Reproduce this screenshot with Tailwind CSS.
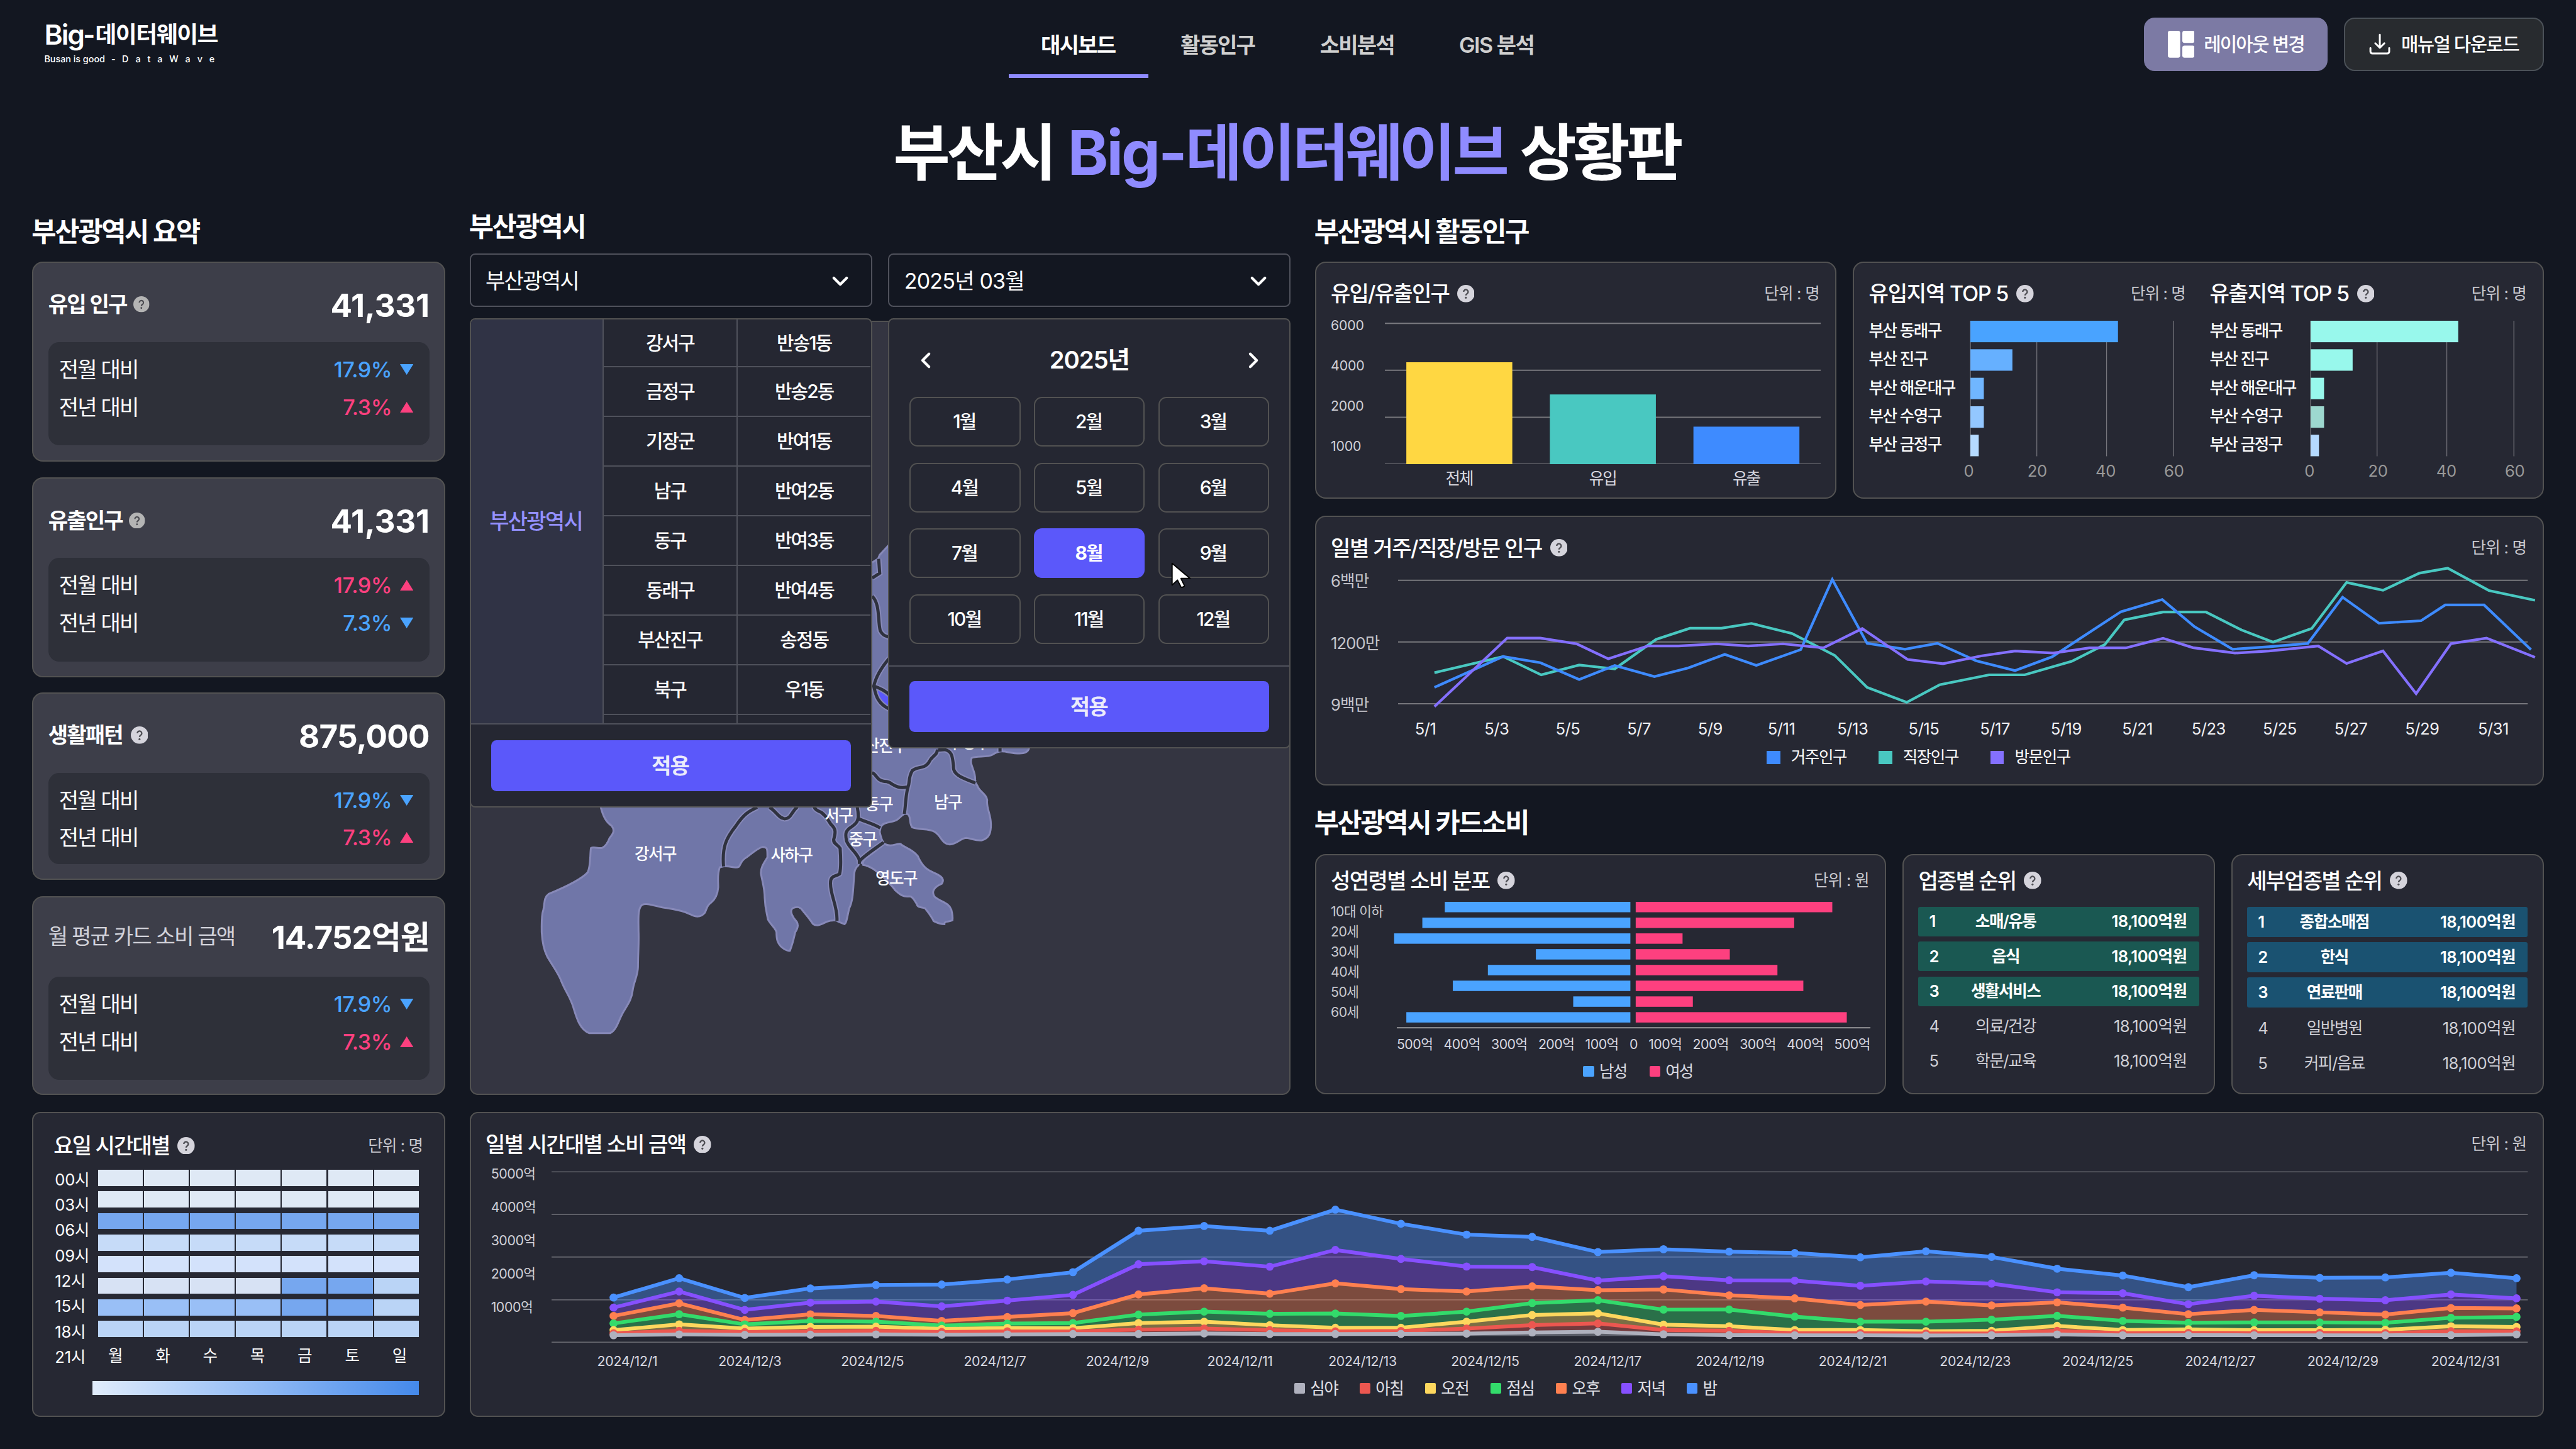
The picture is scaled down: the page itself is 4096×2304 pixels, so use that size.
<!DOCTYPE html>
<html lang="ko" class="text-[34.1333px]">
<head>
<meta charset="utf-8">
<title>Big-데이터웨이브 상황판</title>
<script src="https://cdn.jsdelivr.net/npm/@tailwindcss/browser@4"></script>
</head>
<body class="w-[4096px] h-[2304px] overflow-hidden bg-[#131721] text-white whitespace-nowrap tracking-[-0.055em] font-['Inter','Noto_Sans_CJK_KR',sans-serif]">

<svg class="hidden">
  <symbol id="help" viewBox="0 0 24 24">
    <circle cx="12" cy="12" r="12" fill="currentColor"/>
    <path d="M8.900 9.600a3.100 3.100 0 1 1 4.700 2.600c-1 .65-1.600 1.200-1.600 2.400" fill="none" stroke="#4c4c52" stroke-width="2"/>
    <circle cx="12" cy="17.600" r="1.350" fill="#4c4c52"/>
  </symbol>
  <symbol id="down" viewBox="0 0 10 8"><path d="M0 0h10L5 8z" fill="currentColor"/></symbol>
  <symbol id="up" viewBox="0 0 10 8"><path d="M0 8h10L5 0z" fill="currentColor"/></symbol>
  <symbol id="chev" viewBox="0 0 16 16"><path d="M3.200 5.600L8 10.400l4.800-4.800" fill="none" stroke="currentColor" stroke-width="2" stroke-linecap="round" stroke-linejoin="round"/></symbol>
</svg>

<header class="h-16.5 flex items-start justify-between relative">
  <div class="pl-8.25 pt-3.5">
    <div class="flex items-center h-6">
      <span class="text-[1.3rem] leading-none font-semibold tracking-[-0.045em] w-7.25">Big</span>
      <span class="text-[1.2rem] leading-none font-semibold w-2.25">-</span>
      <span class="text-[1.08rem] leading-none font-bold tracking-[-0.04em]">데이터웨이브</span>
    </div>
    <div class="flex items-center h-3 text-[0.42rem] leading-none font-medium tracking-[0em]">
      <span class="w-12.5">Busan is good</span><span class="w-2">-</span><span class="flex justify-between w-17.25"><i class="not-italic">D</i><i class="not-italic">a</i><i class="not-italic">t</i><i class="not-italic">a</i><i class="not-italic">W</i><i class="not-italic">a</i><i class="not-italic">v</i><i class="not-italic">e</i></span>
    </div>
  </div>
  <nav class="absolute left-188 top-0 flex text-base font-semibold text-[#cfcfcf]">
    <a class="w-26 h-14.5 pt-3 pr-0.25 flex items-center justify-center text-white border-b-[6px] border-[#8f8bff]">대시보드</a>
    <a class="w-26 h-14.5 pt-2.25 pr-0.25 flex items-center justify-center">활동인구</a>
    <a class="w-26 h-14.5 pt-2.25 pr-0.25 flex items-center justify-center">소비분석</a>
    <a class="w-26 h-14.5 pt-2.25 pr-0.25 flex items-center justify-center tracking-[-0.045em]">GIS 분석</a>
  </nav>
  <div class="flex gap-3 pt-3.25 pr-6 text-sm font-medium">
    <button class="w-34.25 h-10 rounded-lg bg-[#7c7aa4] flex items-center justify-center gap-1.75">
      <svg class="size-5" viewBox="0 0 20 20" fill="#fff"><rect x="0" y="0" width="9.200" height="20" rx="1.600"/><rect x="10.800" y="0" width="9.200" height="9" rx="1.600"/><rect x="10.800" y="11" width="9.200" height="9" rx="1.600"/></svg>
      <span>레이아웃 변경</span>
    </button>
    <button class="w-37.25 h-10 rounded-lg bg-[#282b2f] border-2 border-[#4b5158] flex items-center justify-center gap-2">
      <svg class="size-4" viewBox="0 0 16 16" fill="none" stroke="#fff" stroke-width="1.400" stroke-linecap="round" stroke-linejoin="round"><path d="M8 1v9.600M4.600 7.400L8 10.800l3.400-3.400M1 11v2.600a1.400 1.400 0 0 0 1.400 1.400h11.200a1.400 1.400 0 0 0 1.400-1.400V11"/></svg>
      <span class="tracking-[-0.055em]">매뉴얼 다운로드</span>
    </button>
  </div>
</header>

<h1 class="h-22.5 pt-1.5 pr-0.5 flex items-center justify-center text-[2.875rem] leading-none font-bold tracking-[-0.055em] [word-spacing:0.045em]"><span>부산시 <span class="text-[#8f8bff]"><span class="tracking-[-0.03em]">Big-</span>데이터웨이브</span> 상황판</span></h1>

<main class="flex gap-4.5 px-6">

  <section class="w-77 flex flex-col">
    <h2 class="h-6 mt-1.25 mb-2.5 -ml-px flex items-center text-xl font-bold tracking-[-0.053em]">부산광역시 요약</h2>
    <div id="summary" class="flex flex-col"></div>
    <article class="h-56.75 mt-3.25 rounded-md bg-[#262833] border-2 border-[#525252] pl-3.75 pr-4.75">
      <div class="h-6 mt-3 mb-1 flex items-center">
        <h3 class="text-base font-medium">요일 시간대별</h3>
        <svg class="size-3.25 ml-1.5 text-[#d5d4dc]"><use href="#help"/></svg>
        <span class="ml-auto text-xs tracking-[-0.035em] text-[#c9c9cf] -mr-0.75">단위 : 명</span>
      </div>
      <div class="flex justify-between">
        <div id="hours" class="flex flex-col text-xs tracking-[-0.01em] pl-0.25"></div>
        <div class="w-59.75 pt-0.5 flex flex-col">
          <div id="heat" class="grid grid-cols-7 gap-x-0.25 gap-y-[0.2565rem]"></div>
          <div id="days" class="grid grid-cols-7 w-61.75 -ml-1.25 mt-1.5 text-xs text-center"></div>
          <div class="h-2.5 w-60.75 -ml-1 mt-2.75 bg-linear-to-r from-[#e0ecfb] to-[#4489ea]"></div>
        </div>
      </div>
    </article>
  </section>

  <section class="flex flex-col">
    <div class="flex gap-4.5 h-165">

      <div class="w-153 flex flex-col">
        <h2 class="h-6 mt-0.25 mb-2 -ml-px flex items-center text-xl font-bold tracking-[-0.053em]">부산광역시</h2>
        <div class="flex gap-3 h-10 relative z-10">
          <div class="w-75 relative">
            <div class="h-10 rounded border-2 border-[#4f515b] flex items-center justify-between pl-2.75 pr-3.75 pt-0.25 text-base"><span>부산광역시</span><svg class="size-4"><use href="#chev"/></svg></div>
            <div class="absolute left-0 top-12 w-75 h-91.25 rounded border-2 border-[#525252] bg-[#252732] overflow-hidden flex flex-col">
              <div class="h-75.25 flex overflow-hidden text-sm font-medium">
                <div class="w-24.5 bg-[#303345] flex items-center justify-center text-base text-[#9490ff] pr-0.25">부산광역시</div>
                <div id="gu" class="w-25 border-l-2 border-[#4f515b] flex flex-col"></div>
                <div id="dong" class="w-25 border-l-2 border-[#4f515b] flex flex-col"></div>
              </div>
              <div class="border-t-2 border-[#4f515b] px-3.75 pt-3">
                <button class="block w-full h-9.5 rounded bg-[#5b58fa] text-base font-semibold text-[#ebebfb] pr-0.25">적용</button>
              </div>
            </div>
          </div>
          <div class="w-75 relative">
            <div class="h-10 rounded border-2 border-[#4f515b] flex items-center justify-between pl-2.75 pr-3.75 pt-0.25 text-base"><span class="tracking-[-0.025em]">2025년 03월</span><svg class="size-4"><use href="#chev"/></svg></div>
            <div class="absolute left-0 top-12 w-75 h-80.25 rounded border-2 border-[#525252] bg-[#252732] flex flex-col">
              <div class="h-14.5 pt-0.75 px-4.75 flex items-center justify-between">
                <svg class="size-4 rotate-90"><use href="#chev"/></svg>
                <span class="text-lg font-semibold tracking-[-0.03em]">2025년</span>
                <svg class="size-4 -rotate-90"><use href="#chev"/></svg>
              </div>
              <div id="months" class="px-3.75 grid grid-cols-3 gap-x-2.5 gap-y-3 text-sm font-medium"></div>
              <div class="mt-4 border-t-2 border-[#4f515b] px-3.75 pt-2.75">
                <button class="block w-full h-9.5 rounded bg-[#5b58fa] text-base font-semibold text-[#ebebfb] pr-0.25">적용</button>
              </div>
              <svg class="absolute left-52.5 top-45.25 w-4 h-5" viewBox="0 0 16 20"><path d="M.8.8v16.200l4-3.700 2.700 5.300c.3.6 2.800-.6 2.500-1.200L7.400 12.100h6.800z" fill="#fff" stroke="#000" stroke-width=".9" stroke-linejoin="round"/></svg>
            </div>
          </div>
        </div>
        <div class="relative h-144.25 mt-2.5 rounded-md border-2 border-[#525252] bg-[#343541] overflow-hidden">
          <svg class="absolute -inset-[2px] w-153 h-144.25" viewBox="12.5 -1057 1535.400 2585" preserveAspectRatio="none">
            <g fill="#7076a8" stroke="#8789b8" stroke-width="3">
              <path vector-effect="non-scaling-stroke" d="M257 500V565C262 600 268 618 278 630C284 645 281 655 274 670C270 690 265 700 259 704C250 705 244 698 239 704C237 730 239 760 233 785C220 810 190 835 160 857C150 870 153 890 150 910C146 930 147 960 147 985C148 1015 150 1040 157 1065C168 1100 178 1120 184 1150C192 1185 200 1200 206 1235C212 1270 218 1310 236 1322L275 1322C288 1310 290 1280 300 1250C308 1225 315 1210 317 1180C319 1150 327 1130 327 1100C327 1060 329 1020 328 980C328 940 326 905 335 893C345 885 360 900 380 904C395 908 410 912 425 925C435 935 445 935 452 920C456 905 456 895 463 887C472 875 476 860 477 835C477 810 475 790 480 768L487 765C484 700 492 670 510 630C525 590 535 580 550 568V500z"/>
              <path vector-effect="non-scaling-stroke" d="M765 -250L776 -262L779 -275L797 -310H1058V372C1055 388 1045 392 1020 384C1010 380 1002 378 990 392C980 402 960 395 951 403C945 425 961 450 957 482L962 497C965 515 980 525 980 545C978 570 987 590 987 625C987 650 985 670 970 678C960 680 955 675 942 670C930 670 925 690 910 692C895 690 895 665 882 650C870 636 855 645 840 635C833 620 839 600 831 590L825 590C815 600 815 612 803 615C790 620 784 622 781 633L779 650C781 665 782 675 785 682L742 745L739 762C733 770 731 785 731 800C729 850 729 880 722 905C718 935 717 955 713 958L702 950L697 945C692 946 688 944 680 950C670 958 662 968 654 957C648 940 643 930 636 915C632 902 625 897 616 905C610 915 616 935 624 950C627 960 627 970 621 985C619 1000 617 1020 611 1047C605 1048 600 1042 594 1032C588 1020 586 1010 586 985C584 970 575 960 570 942C568 920 565 910 564 870C564 840 560 820 557 790C556 770 562 755 569 735C569 710 570 700 560 700C550 705 540 722 530 735C520 745 520 755 516 766C510 774 500 763 490 765L487 765C484 700 492 670 510 630C525 590 535 580 550 568V-250z"/>
              <path vector-effect="non-scaling-stroke" d="M788 690C800 702 810 688 818 690C825 703 838 705 850 730C862 780 875 780 888 793C900 805 898 815 895 823C880 835 875 850 882 867C895 885 908 885 913 910C915 925 916 935 915 945C908 952 900 945 900 958C890 958 885 952 880 948C875 930 870 920 864 905C858 900 850 905 848 890C843 875 840 865 834 865C820 868 815 855 808 845C803 830 795 820 788 805C775 785 765 765 748 760C745 745 755 735 765 722z"/>
            </g>
            <path vector-effect="non-scaling-stroke" d="M774 172L797 200V238C780 222 777 205 774 172z" fill="#5b58fa"/>
            <g fill="none">
              <path vector-effect="non-scaling-stroke" stroke="#8789b8" stroke-width="9" d="M487 765C484 700 492 670 510 630C525 590 535 580 550 568M573 568C585 580 590 604 601 606C613 606 613 585 625 566M699 947C701 900 686 860 687 820C687 795 696 800 704 790C707 770 706 730 705 705C700 690 692 690 693 675C697 650 697 640 688 625C680 605 680 598 670 585C662 578 658 575 656 565M741 757V745C738 720 722 705 717 680C714 655 715 645 727 632C738 618 738 610 739 600C739 585 738 575 737 567M741 607C755 618 770 625 780 637M786 685C775 700 745 735 742 747M765 452C775 460 772 480 792 482C803 485 808 508 830 500M825 590C828 560 827 530 832 500C836 480 832 470 840 445C850 430 862 440 870 420C878 390 885 400 887 375M888 377L900 375C915 380 915 400 917 430C915 460 935 470 958 487M1004 360V382M777 -262L779 -214L765 -198M765 -137C780 -110 775 -57 780 -22C785 -5 790 -5 797 0M797 70C785 95 772 130 768 163C772 200 777 222 797 240M768 163C780 170 790 180 797 192"/>
              <path vector-effect="non-scaling-stroke" stroke="#2f323f" stroke-width="5" d="M487 765C484 700 492 670 510 630C525 590 535 580 550 568M573 568C585 580 590 604 601 606C613 606 613 585 625 566M699 947C701 900 686 860 687 820C687 795 696 800 704 790C707 770 706 730 705 705C700 690 692 690 693 675C697 650 697 640 688 625C680 605 680 598 670 585C662 578 658 575 656 565M741 757V745C738 720 722 705 717 680C714 655 715 645 727 632C738 618 738 610 739 600C739 585 738 575 737 567M741 607C755 618 770 625 780 637M786 685C775 700 745 735 742 747M765 452C775 460 772 480 792 482C803 485 808 508 830 500M825 590C828 560 827 530 832 500C836 480 832 470 840 445C850 430 862 440 870 420C878 390 885 400 887 375M888 377L900 375C915 380 915 400 917 430C915 460 935 470 958 487M1004 360V382M777 -262L779 -214L765 -198M765 -137C780 -110 775 -57 780 -22C785 -5 790 -5 797 0M797 70C785 95 772 130 768 163C772 200 777 222 797 240M768 163C780 170 790 180 797 192"/>
            </g>
          </svg>
          <div id="pins" class="text-xs font-medium tracking-[-0.06em]"></div>
        </div>
      </div>

      <div class="w-229 flex flex-col">
        <h2 class="h-6 mt-1.25 mb-2.5 -ml-px flex items-center text-xl font-bold tracking-[-0.053em]">부산광역시 활동인구</h2>
        <div class="flex gap-3 h-[11.05rem]">

          <article class="w-97.25 rounded-lg bg-[#262833] border-2 border-[#525252] p-2.75">
            <div class="h-6 flex items-center">
              <h3 class="text-base font-medium">유입/유출인구</h3>
              <svg class="size-3.25 ml-1.5 text-[#d5d4dc]"><use href="#help"/></svg>
              <span class="ml-auto text-xs tracking-[-0.03em] text-[#c9c9cf] pr-0.25">단위 : 명</span>
            </div>
            <div class="flex justify-between">
              <div class="-mt-0.75 text-[0.625rem] tracking-[-0.01em] text-[#d0d0d7] flex flex-col">
                <span class="h-7.5 flex items-center">6000</span><span class="h-7.5 flex items-center">4000</span><span class="h-7.5 flex items-center">2000</span><span class="h-7.5 flex items-center">1000</span>
              </div>
              <div class="w-81.25 pt-2.25">
                <svg class="w-81.25 h-26.5" viewBox="0 0 325 106">
                  <path d="M0 1h325M0 36h325M0 71h325M0 106h325" stroke="#77777d" stroke-width="1" fill="none"/>
                  <rect x="16" y="30" width="79" height="76" fill="#ffd742"/><rect x="123" y="54" width="79" height="52" fill="#49c8c1"/><rect x="230" y="78" width="79" height="28" fill="#3e8bff"/>
                </svg>
                <div class="grid grid-cols-3 px-0.5 mt-0.75 text-xs text-center text-[#d8d8e0]"><span>전체</span><span>유입</span><span>유출</span></div>
              </div>
            </div>
          </article>

          <article id="top5" class="w-128.75 rounded-lg bg-[#262833] border-2 border-[#525252] p-2.75 flex gap-4.5"></article>
        </div>

        <article class="mt-[0.79rem] h-50.25 shrink-0 rounded-lg bg-[#262833] border-2 border-[#525252] p-2.75">
          <div class="h-6 flex items-center">
            <h3 class="text-base font-medium tracking-[-0.045em]">일별 거주/직장/방문 인구</h3>
            <svg class="size-3.25 ml-1.5 text-[#d5d4dc]"><use href="#help"/></svg>
            <span class="ml-auto text-xs tracking-[-0.03em] text-[#c9c9cf] pr-0.25">단위 : 명</span>
          </div>
          <div class="flex justify-between items-start">
            <div class="-mt-2.5 -mb-6 text-xs text-[#c5c5cc] tracking-[-0.035em]">
              <div class="h-11.5 flex items-center">6백만</div><div class="h-11.5 flex items-center">1200만</div><div class="h-11.5 flex items-center">9백만</div>
            </div>
            <svg class="w-210.5 h-[6.637rem] overflow-visible" viewBox="111 320 1397 740" preserveAspectRatio="none" fill="none">
              <g stroke="#77777d" stroke-width="2"><path vector-effect="non-scaling-stroke" d="M111 404.500H1508"/><path vector-effect="non-scaling-stroke" d="M111 724H1508"/><path vector-effect="non-scaling-stroke" d="M111 1045H1508"/></g>
              <g stroke-width="4.200">
                <polyline vector-effect="non-scaling-stroke" stroke="#49c8c1" points="156,884 241,800 288,895 335,844 379,864 430,711 472,653 511,653 548,628 598,680 651,794 691,960 740,1038 781,946 842,895 886,895 944,825 985,738 1009,610 1057,569 1110,569 1154,662 1193,725 1241,654 1284,415 1329,456 1374,367 1409,341 1460,457 1517,508"/>
                <polyline vector-effect="non-scaling-stroke" stroke="#3e8bff" points="156,960 241,800 287,832 335,919 379,847 428,904 470,859 515,789 554,846 609,764 648,400 691,731 738,762 778,731 826,822 874,873 920,801 1005,567 1056,504 1096,645 1143,762 1188,749 1236,732 1279,492 1324,627 1376,614 1406,532 1454,532 1512,764"/>
                <polyline vector-effect="non-scaling-stroke" stroke="#8470ff" points="156,1060 246,704 287,704 332,734 371,812 420,745 458,745 505,734 544,745 587,734 637,755 685,655 741,815 785,837 832,797 874,771 921,782 966,755 1011,755 1057,705 1094,754 1146,782 1188,771 1249,745 1284,836 1329,771 1370,993 1413,733 1457,704 1517,804"/>
              </g>
            </svg>
          </div>
          <div id="mayAxis" class="grid grid-cols-16 w-212.25 ml-11 mt-2.25 h-4 items-center text-center text-xs tracking-[-0.02em] text-[#f0f0f4]"></div>
          <div class="flex justify-center gap-6 mt-1.25 h-4 text-xs tracking-[-0.057em] -ml-4">
            <span class="flex items-center gap-2"><i class="size-2.5 bg-[#3e8bff]"></i>거주인구</span>
            <span class="flex items-center gap-2"><i class="size-2.5 bg-[#49c8c1]"></i>직장인구</span>
            <span class="flex items-center gap-2"><i class="size-2.5 bg-[#8470ff]"></i>방문인구</span>
          </div>
        </article>

        <h2 class="h-6 mt-4 mb-2.75 -ml-px flex items-center text-xl font-bold tracking-[-0.053em]">부산광역시 카드소비</h2>
        <div class="flex gap-3 h-[11.2rem] shrink-0">
          <article class="w-106.5 rounded-lg bg-[#262833] border-2 border-[#525252] p-2.75">
            <div class="h-4 flex items-center">
              <h3 class="text-base font-medium tracking-[-0.05em]">성연령별 소비 분포</h3>
              <svg class="size-3.25 ml-1.5 text-[#d5d4dc]"><use href="#help"/></svg>
              <span class="ml-auto text-xs tracking-[-0.03em] text-[#c9c9cf] pr-0.25">단위 : 원</span>
            </div>
            <div class="flex justify-between pt-2">
              <div class="text-[0.625rem] text-[#c9c9cf] tracking-[-0.03em]">
                <div class="h-3.75 flex items-center">10대 이하</div><div class="h-3.75 flex items-center">20세</div><div class="h-3.75 flex items-center">30세</div><div class="h-3.75 flex items-center">40세</div><div class="h-3.75 flex items-center">50세</div><div class="h-3.75 flex items-center">60세</div>
              </div>
              <div class="w-88.25">
                <svg id="gender" class="w-88.25 h-[5.9rem] overflow-visible" viewBox="233 537 1243 658" preserveAspectRatio="none"></svg>
                <div class="flex justify-between mt-1 h-4 items-center text-[0.625rem] tracking-[-0.025em] text-[#d8d8e0]"><span>500억</span><span>400억</span><span>300억</span><span>200억</span><span>100억</span><span>0</span><span>100억</span><span>200억</span><span>300억</span><span>400억</span><span>500억</span></div>
                <div class="flex gap-4.25 ml-34.75 h-4 mt-1 text-xs text-[#d8d8e0]"><span class="flex items-center gap-1"><i class="size-2 rounded-[2px] bg-[#4aa3ff]"></i>남성</span><span class="flex items-center gap-1"><i class="size-2 rounded-[2px] bg-[#fd407f]"></i>여성</span></div>
              </div>
            </div>
          </article>
          <article class="w-58.25 rounded-lg bg-[#262833] border-2 border-[#525252] p-2.75">
            <div class="h-4 flex items-center">
              <h3 class="text-base font-medium">업종별 순위</h3>
              <svg class="size-3.25 ml-1.5 text-[#d5d4dc]"><use href="#help"/></svg>
            </div>
            <div id="rankA" class="mt-[0.72rem] flex flex-col gap-1 text-xs"></div>
          </article>
          <article class="w-58.25 rounded-lg bg-[#262833] border-2 border-[#525252] p-2.75">
            <div class="h-4 flex items-center">
              <h3 class="text-base font-medium">세부업종별 순위</h3>
              <svg class="size-3.25 ml-1.5 text-[#d5d4dc]"><use href="#help"/></svg>
            </div>
            <div id="rankB" class="mt-[0.72rem] flex flex-col gap-1 text-xs"></div>
          </article>
        </div>
      </div>
    </div>

    <article class="mt-3.25 h-56.75 rounded-md bg-[#262833] border-2 border-[#525252] p-2.75">
      <div class="h-6 flex items-center">
        <h3 class="text-base font-medium tracking-[-0.052em]">일별 시간대별 소비 금액</h3>
        <svg class="size-3.25 ml-1.5 text-[#d5d4dc]"><use href="#help"/></svg>
        <span class="ml-auto text-xs tracking-[-0.03em] text-[#c9c9cf] pr-0.25">단위 : 원</span>
      </div>
      <div class="flex justify-between">
        <div class="pl-1 text-[0.625rem] text-[#d0d0d7] tracking-[-0.02em]">
          <div class="h-[1.55rem] -mt-0.5 flex items-center">5000억</div><div class="h-[1.55rem] flex items-center">4000억</div><div class="h-[1.55rem] flex items-center">3000억</div><div class="h-[1.55rem] flex items-center">2000억</div><div class="h-[1.55rem] flex items-center">1000억</div>
        </div>
        <svg id="area" class="w-368.25 h-32 mt-2 overflow-visible" viewBox="0 0 1473 128"></svg>
      </div>
      <div id="decAxis" class="grid grid-cols-16 w-[91.33rem] ml-15 mt-1.5 h-4 items-center text-center text-[0.625rem] tracking-[-0.015em] text-[#d8d8e0]"></div>
      <div id="decLegend" class="flex justify-center gap-[1.01rem] -ml-0.5 mt-1 h-4 text-xs tracking-[-0.06em] text-[#e0e0e6]"></div>
    </article>
  </section>
</main>

<script>
const put = (id, html) => { document.getElementById(id).innerHTML = html; };

const dn = '<span class="flex items-center gap-1.5 font-medium text-[#4aa3ff] tracking-[-0.015em]">', up = '<span class="flex items-center gap-1.5 font-medium text-[#fd407f] tracking-[-0.015em]">';
const iconDn = '<svg class="w-2.5 h-2"><use href="#down"/></svg></span>', iconUp = '<svg class="w-2.5 h-2"><use href="#up"/></svg></span>';
const change = (v, isUp) => (isUp ? up : dn) + v + (isUp ? iconUp : iconDn);
put('summary', [
  ['h-37.25', 'h-19.25', 'h-10 mb-2', '<span class="font-semibold">유입 인구</span><svg class="size-3 ml-1.25 text-[#b4b4b4]"><use href="#help"/></svg>', '41,331', false, true, 'tracking-[-0.005em]'],
  ['h-37.25 mt-3', 'h-19.25', 'h-10 mb-2', '<span class="font-semibold">유출인구</span><svg class="size-3 ml-1.25 text-[#b4b4b4]"><use href="#help"/></svg>', '41,331', true, false, 'tracking-[-0.005em]'],
  ['h-35 mt-2.75', 'h-17', 'h-10 mb-2', '<span class="font-semibold">생활패턴</span><svg class="size-3.25 ml-1.5 text-[#d5d4dc]"><use href="#help"/></svg>', '875,000', false, true, 'tracking-[-0.015em]'],
  ['h-37 mt-3', 'h-19.25', 'h-9 mb-3', '<span class="text-[#d2d2da]">월 평균 카드 소비 금액</span>', '14.752억원', false, true, 'tracking-[-0.02em]']
].map(c => `<article class="${c[0]} rounded-lg bg-[#3d3e49] border-2 border-[#525252] p-2.75">
  <div class="${c[2]} flex items-center text-base">${c[3]}<strong class="ml-auto text-2xl font-bold ${c[7]} pt-0.25">${c[4]}</strong></div>
  <div class="${c[1]} rounded-lg bg-[#2e3039] pt-2 pl-2 pr-3 text-base flex flex-col gap-1">
    <div class="h-6 pt-0.25 flex items-center justify-between"><span>전월 대비</span>${change('17.9%', c[5])}</div>
    <div class="h-6 pt-0.25 flex items-center justify-between"><span>전년 대비</span>${change('7.3%', c[6])}</div>
  </div></article>`).join(''));

put('hours', ['00','03','06','09','12','15','18','21'].map(h => `<span class="h-[1.181rem] flex items-center">${h}시</span>`).join(''));
const A = '#dfe9f5', B = '#76a7ef', C = '#c6dbf8', D = '#d3e2fb', E = '#d7e2f4', F = '#bad4f6', G = '#99bff6';
put('heat', [[A,A,A,A,A,A,A],[A,A,A,A,A,A,A],[B,B,B,B,B,B,B],[C,C,C,C,C,C,C],[D,D,D,D,D,D,D],[E,E,E,E,B,B,F],[G,G,G,G,B,B,F],[F,F,F,F,F,F,F]]
  .flat().map(c => `<i class="h-3" style="background:${c}"></i>`).join(''));
put('days', [...'월화수목금토일'].map(d => `<span>${d}</span>`).join(''));

const cells = list => list.map((t, i) => `<span class="${i ? 'h-9.25' : 'h-9'} shrink-0 border-b-2 border-[#4f515b] flex items-center justify-center">${t}</span>`).join('');
put('gu', cells(['강서구','금정구','기장군','남구','동구','동래구','부산진구','북구']));
put('dong', cells(['반송1동','반송2동','반여1동','반여2동','반여3동','반여4동','송정동','우1동']));
put('months', Array.from({length: 12}, (_, i) => i === 7
  ? '<span class="h-9.25 rounded-md bg-[#5b58fa] font-bold flex items-center justify-center pr-0.25">8월</span>'
  : `<span class="h-9.25 rounded-md border-2 border-[#525252] flex items-center justify-center pr-0.25">${i + 1}월</span>`).join(''));

/* map labels: x, y of the centre in panel units */
put('pins', [['강서구',137.500,396.500],['사하구',239,397.500],['서구',274,368],['중구',292,386],['영도구',317,415],['남구',355.500,358],['동구',304,359.500],['부산진구',304,316],['수영구',370.700,313.500]]
  .map(p => `<span class="absolute -translate-1/2" style="left:${p[1] / 16}rem;top:${p[2] / 16}rem">${p[0]}</span>`).join(''));

const regions = ['동래구','진구','해운대구','수영구','금정구'], lens = [110, 31.300, 10, 10, 6.200];
put('top5', [['유입지역 TOP 5',['#49a3ff','#66b0ff','#70b6ff','#93c7ff','#b5daff']],['유출지역 TOP 5',['#98f8ec','#98f8ec','#98f8ec','#9dd8cf','#b5daff']]].map(p => `<div class="w-59">
  <div class="h-6 flex items-center"><h3 class="text-base font-medium tracking-[-0.037em]">${p[0]}</h3><svg class="size-3.25 ml-1.5 text-[#d5d4dc]"><use href="#help"/></svg><span class="ml-auto text-xs tracking-[-0.035em] text-[#c9c9cf]">단위 : 명</span></div>
  <div class="flex pt-1.25">
    <div class="w-18.75 text-xs font-medium tracking-[-0.06em]">${regions.map(r => `<div class="h-[1.328rem] flex items-center">부산 ${r}</div>`).join('')}</div>
    <svg class="w-39 h-25.5 mt-0.75" viewBox="0 0 156 102"><path d="M.5 0v101M50 0v101M102 0v101M152 0v101" stroke="#75757c" stroke-width=".6"/>${lens.map((w, i) => `<rect x="0.500" y="${i * 21.25}" width="${w}" height="16" fill="${p[1][i]}"/>`).join('')}</svg>
  </div>
  <div class="grid grid-cols-4 w-51 ml-12.25 mt-0.25 h-4 items-center text-center text-xs tracking-[-0.01em] text-[#999]"><span>0</span><span>20</span><span>40</span><span>60</span></div>
</div>`).join(''));

put('mayAxis', Array.from({length: 16}, (_, i) => `<span>5/${i * 2 + 1}</span>`).join(''));

put('gender', [359,300,226,598,472,380,696,258].map((x, i) => `<rect x="${x}" y="${537 + i * 81.86}" width="${846 - x}" height="54" fill="#4aa3ff"/>`).join('')
  + [1376,1276,983,1107,1232,1300,1010,1414].map((x, i) => `<rect x="860" y="${537 + i * 81.86}" width="${x - 860}" height="54" fill="#fd407f"/>`).join('')
  + '<path d="M233 1191h1243" stroke="#85858a" stroke-width="7"/>');

const rank = (id, names, on, h) => put(id, names.map((n, i) => `<div class="${h} ${i < 3 ? on + ' font-semibold' : 'text-[#cfcfd6]'} rounded-[3px] px-2 grid grid-cols-[1.25rem_4.625rem_1fr] items-center"><span>${i + 1}</span><span class="text-center tracking-[-0.057em]">${n}</span><span class="justify-self-end tracking-[-0.02em] pr-0.25">18,100억원</span></div>`).join(''));
rank('rankA', ['소매/유통','음식','생활서비스','의료/건강','학문/교육'], 'bg-[#1a5852]', 'h-5.5');
rank('rankB', ['종합소매점','한식','연료판매','일반병원','커피/음료'], 'bg-[#1a5271]', 'h-[1.4rem]');

const series = [
  ['심야','#afb1be',[1130,1126,1128,1127,1126,1127,1126,1124,1124,1121,1124,1124,1123,1122,1116,1113,1125,1129,1130,1130,1131,1130,1126,1130,1129,1130,1130,1130,1129,1126]],
  ['아침','#ec5750',[1120,1108,1114,1111,1108,1114,1111,1111,1102,1097,1105,1111,1109,1097,1080,1072,1104,1108,1119,1119,1121,1120,1108,1119,1118,1119,1118,1119,1110,1111]],
  ['오전','#fdd75e',[1105,1077,1097,1089,1088,1099,1094,1096,1070,1064,1081,1093,1093,1064,1031,1023,1078,1086,1104,1104,1110,1108,1084,1104,1101,1105,1105,1103,1086,1089]],
  ['점심','#33db6b',[1072,1027,1077,1060,1064,1083,1073,1070,1029,1015,1025,1024,1036,1015,973,959,1005,1004,1039,1064,1064,1054,1035,1060,1069,1067,1067,1069,1045,1040]],
  ['오후','#ff8050',[1036,974,1055,1028,1036,1060,1041,1022,931,901,927,877,905,917,892,910,907,935,950,982,966,985,970,995,1027,1006,1018,1029,997,999]],
  ['저녁','#8650ff',[995,917,1006,971,966,989,961,933,784,770,796,714,758,795,798,864,842,862,864,889,868,878,921,925,979,937,952,959,931,950]],
  ['밤','#4a91ff',[946,852,948,902,885,883,858,823,621,598,621,518,587,640,651,725,711,723,729,750,721,748,806,839,896,838,850,848,825,852]]
];
const X = i => (46.200 + i * 48.910).toFixed(1), Y = v => (0.6 + (v - 334) * 0.15306).toFixed(1);
const pts = d => d.map((v, i) => X(i) + ',' + Y(v));
let svg = '<path d="M0 .6h1473M0 32.400h1473M0 64.100h1473M0 96h1473M0 127.600h1473" stroke="#7b7b82" stroke-width=".6"/>';
series.forEach((s, k) => {
  const base = k ? series[k - 1][2] : s[2].map(() => 1133);
  svg += `<polygon points="${pts(s[2]).concat(pts(base).reverse()).join(' ')}" fill="${s[1]}" fill-opacity=".4"/>`;
});
[...series].reverse().forEach(s => {
  svg += `<polyline points="${pts(s[2]).join(' ')}" fill="none" stroke="${s[1]}" stroke-width="2.800"/>` + s[2].map((v, i) => `<circle cx="${X(i)}" cy="${Y(v)}" r="3" fill="${s[1]}"/>`).join('');
});
put('area', svg);
put('decAxis', Array.from({length: 16}, (_, i) => `<span>2024/12/${i * 2 + 1}</span>`).join(''));
put('decLegend', series.map(s => `<span class="flex items-center gap-1"><i class="size-2 rounded-[2px]" style="background:${s[1]}"></i>${s[0]}</span>`).join(''));
</script>
</body>
</html>
